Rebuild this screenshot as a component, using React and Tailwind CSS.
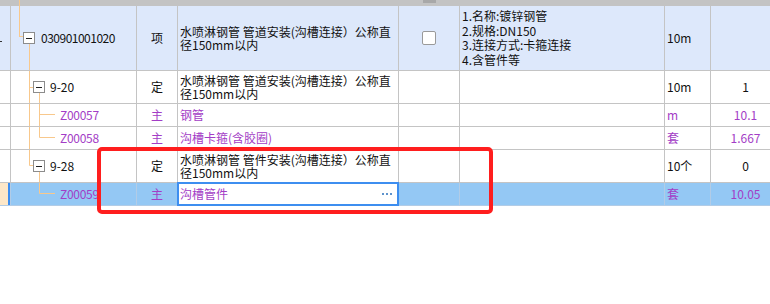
import clsx from 'clsx';

const LINE = '#f8c88c';
const PURPLE = 'text-[#a33dc6]';

function MinusBox() {
  return (
    <span className="relative z-10 flex h-[12px] w-[12px] shrink-0 items-center justify-center border border-[#8c8c8c] bg-white">
      <span className="h-px w-[6px] bg-[#222]" />
    </span>
  );
}

// orange connector lines of the tree, drawn per cell
function Tree({ lines, h }) {
  return (
    <svg className="pointer-events-none absolute left-0 top-0" width="126" height={h}>
      {lines.map((l, i) => (
        <line key={i} x1={l[0]} y1={l[1]} x2={l[2]} y2={l[3]} stroke={LINE} strokeWidth="1" />
      ))}
    </svg>
  );
}

function Lines({ items, lh }) {
  return (
    <div className="flex flex-col">
      {items.map((t, i) => (
        <div key={i} className={clsx('whitespace-nowrap', lh)}>{t}</div>
      ))}
    </div>
  );
}

function Cell({ className, children, sel }) {
  return (
    <div className={clsx('relative flex shrink-0 items-center border-b border-r', sel ? 'border-[#b2cce6]' : 'border-[#c4c4c4]', className)}>
      {children}
    </div>
  );
}

function Row({ h, bg, sel, left, code, type, typePurple, name, namePurple, check, feats, unit, qty, purple }) {
  return (
    <div className={clsx('flex', h, bg)}>
      <Cell sel={sel} className="w-[11px]">{left}</Cell>
      <Cell sel={sel} className="w-[126px]">{code}</Cell>
      <Cell sel={sel} className={clsx('w-[41px] justify-center', typePurple ? PURPLE : 'text-[#111]')}>{type}</Cell>
      <Cell sel={sel} className={clsx('w-[221px] px-[2px] whitespace-nowrap', namePurple ? PURPLE : 'text-[#111]')}>{name}</Cell>
      <Cell sel={sel} className="w-[61px] justify-center">{check}</Cell>
      <Cell sel={sel} className="w-[205px] px-[2px] text-[#111]">{feats}</Cell>
      <Cell sel={sel} className={clsx('w-[46px] pl-[2px]', purple ? PURPLE : 'text-[#111]')}>{unit}</Cell>
      <Cell sel={sel} className={clsx('w-[70px] justify-center', purple ? PURPLE : 'text-[#111]')}>{qty}</Cell>
    </div>
  );
}

const NAME_A = ['水喷淋钢管 管道安装(沟槽连接）公称直', '径150mm以内'];
const NAME_B = ['水喷淋钢管 管件安装(沟槽连接）公称直', '径150mm以内'];

export default function App() {
  return (
    <div className="relative h-[304px] w-[770px] overflow-hidden bg-white font-['Noto_Sans_CJK_SC',sans-serif] text-[12px]">
      {/* header strip */}
      <div className="relative flex h-[6px] bg-[#c3c3c3]">
        <div className="ml-[19px] h-full w-px bg-[#f8c88c]" />
        <div className="ml-[403px] h-[3px] w-[13px] bg-[#a8a8a8]" />
      </div>

      <Row
        h="h-[65px]"
        bg="bg-[#dde8fb]"
        left={<span className="mt-[7px] h-px w-[2px] bg-[#333]" />}
        code={
          <>
            <Tree h={64} lines={[[8.5, 0, 8.5, 31], [8.5, 30.5, 12, 30.5], [18.5, 37, 18.5, 64]]} />
            <div className="flex items-center pl-[12px]">
              <MinusBox />
              <span className="ml-[6px] tracking-[-0.5px] text-[#111]">030901001020</span>
            </div>
          </>
        }
        type="项"
        name={<Lines items={NAME_A} lh="leading-[13px]" />}
        check={<span className="h-[14px] w-[14px] rounded-[2px] border border-[#9a9a9a] bg-white" />}
        feats={<Lines items={['1.名称:镀锌钢管', '2.规格:DN150', '3.连接方式:卡箍连接', '4.含管件等']} lh="leading-[14.5px]" />}
        unit="10m"
      />

      <Row
        h="h-[33px]"
        bg="bg-white"
        code={
          <>
            <Tree h={32} lines={[[18.5, 0, 18.5, 32], [18.5, 16.5, 22, 16.5], [28.5, 22, 28.5, 32]]} />
            <div className="flex items-center pl-[22px]">
              <MinusBox />
              <span className="ml-[5px] text-[#111]">9-20</span>
            </div>
          </>
        }
        type="定"
        name={<Lines items={NAME_A} lh="leading-[13px]" />}
        unit="10m"
        qty="1"
      />

      <Row
        h="h-[23px]"
        bg="bg-white"
        purple
        code={
          <>
            <Tree h={22} lines={[[18.5, 0, 18.5, 22], [28.5, 0, 28.5, 22], [28.5, 10.5, 44, 10.5]]} />
            <span className={clsx('pl-[49px] tracking-[-0.3px]', PURPLE)}>Z00057</span>
          </>
        }
        type="主"
        typePurple
        name="钢管"
        namePurple
        unit="m"
        qty="10.1"
      />

      <Row
        h="h-[23px]"
        bg="bg-white"
        purple
        code={
          <>
            <Tree h={22} lines={[[18.5, 0, 18.5, 22], [28.5, 0, 28.5, 10.5], [28.5, 10.5, 44, 10.5]]} />
            <span className={clsx('pl-[49px] tracking-[-0.3px]', PURPLE)}>Z00058</span>
          </>
        }
        type="主"
        typePurple
        name="沟槽卡箍(含胶圈)"
        namePurple
        unit="套"
        qty="1.667"
      />

      <Row
        h="h-[33px]"
        bg="bg-white"
        code={
          <>
            <Tree h={32} lines={[[18.5, 0, 18.5, 15.5], [18.5, 15.5, 22, 15.5], [28.5, 21, 28.5, 32]]} />
            <div className="flex items-center pl-[22px]">
              <MinusBox />
              <span className="ml-[5px] text-[#111]">9-28</span>
            </div>
          </>
        }
        type="定"
        name={<Lines items={NAME_B} lh="leading-[13px]" />}
        unit="10个"
        qty="0"
      />

      <Row
        h="h-[23px]"
        bg="bg-[#94c8f4]"
        sel
        purple
        left={
          <div className="flex h-full w-full">
            <div className="h-full flex-1 bg-[#fde7c8]" />
            <div className="h-full w-[2px] bg-[#3d8ef0]" />
          </div>
        }
        code={
          <>
            <Tree h={22} lines={[[28.5, 0, 28.5, 10.5], [28.5, 10.5, 44, 10.5]]} />
            <span className={clsx('pl-[49px] tracking-[-0.3px]', PURPLE)}>Z00059</span>
          </>
        }
        type="主"
        typePurple
        name={
          <div className="absolute -bottom-px -left-px -right-px -top-px flex items-center border-2 border-[#3d8ef0] bg-white pl-[1px]">
            <span className={PURPLE}>沟槽管件</span>
            <span className="absolute right-[5px] top-[9px] flex gap-[2px]">
              <span className="h-[2px] w-[2px] bg-[#5f93cc]" />
              <span className="h-[2px] w-[2px] bg-[#5f93cc]" />
              <span className="h-[2px] w-[2px] bg-[#5f93cc]" />
            </span>
          </div>
        }
        unit="套"
        qty="10.05"
      />

      {/* red annotation box */}
      <div className="pointer-events-none absolute left-[97px] top-[147px] h-[67px] w-[396px] rounded-[5px] border-4 border-[#ff1e1e]" />
    </div>
  );
}
